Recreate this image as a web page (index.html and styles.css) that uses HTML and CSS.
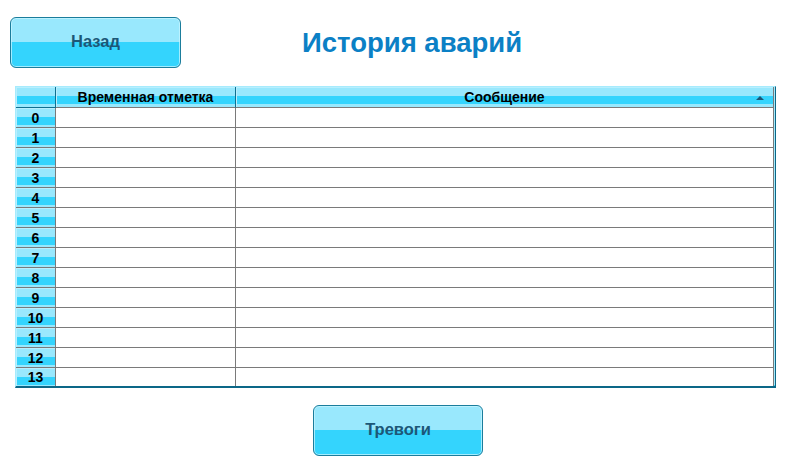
FILE: index.html
```html
<!DOCTYPE html>
<html lang="ru">
<head>
<meta charset="utf-8">
<title>История аварий</title>
<link rel="stylesheet" href="styles.css">
</head>
<body>
<div class="page">
  <header class="top">
    <button class="btn btn-back" type="button">Назад</button>
    <h1 class="title">История аварий</h1>
  </header>

  <div class="grid">
    <div class="row head-row">
      <div class="cell rh hc"></div>
      <div class="cell hc">Временная отметка</div>
      <div class="cell hc last">Сообщение<span class="sort"></span></div>
    </div>
    <div class="row"><div class="cell rh">0</div><div class="cell"></div><div class="cell last"></div></div>
    <div class="row"><div class="cell rh">1</div><div class="cell"></div><div class="cell last"></div></div>
    <div class="row"><div class="cell rh">2</div><div class="cell"></div><div class="cell last"></div></div>
    <div class="row"><div class="cell rh">3</div><div class="cell"></div><div class="cell last"></div></div>
    <div class="row"><div class="cell rh">4</div><div class="cell"></div><div class="cell last"></div></div>
    <div class="row"><div class="cell rh">5</div><div class="cell"></div><div class="cell last"></div></div>
    <div class="row"><div class="cell rh">6</div><div class="cell"></div><div class="cell last"></div></div>
    <div class="row"><div class="cell rh">7</div><div class="cell"></div><div class="cell last"></div></div>
    <div class="row"><div class="cell rh">8</div><div class="cell"></div><div class="cell last"></div></div>
    <div class="row"><div class="cell rh">9</div><div class="cell"></div><div class="cell last"></div></div>
    <div class="row"><div class="cell rh">10</div><div class="cell"></div><div class="cell last"></div></div>
    <div class="row"><div class="cell rh">11</div><div class="cell"></div><div class="cell last"></div></div>
    <div class="row"><div class="cell rh">12</div><div class="cell"></div><div class="cell last"></div></div>
    <div class="row final"><div class="cell rh">13</div><div class="cell"></div><div class="cell last"></div></div>
  </div>

  <footer class="bottom">
    <button class="btn btn-alarms" type="button">Тревоги</button>
  </footer>
</div>
</body>
</html>
```

FILE: styles.css
```css
* { box-sizing: border-box; }

html, body {
  margin: 0;
  padding: 0;
  background: #ffffff;
}

body {
  font-family: "Liberation Sans", Arial, sans-serif;
  width: 794px;
  height: 465px;
  overflow: hidden;
}

.page {
  display: flex;
  flex-direction: column;
}

/* ---------- top bar ---------- */
.top {
  display: flex;
  align-items: center;
  padding: 17px 0 0 10px;
}

.btn {
  display: flex;
  align-items: center;
  justify-content: center;
  width: 171px;
  height: 51px;
  padding: 0 0 2px 0;
  border: 1px solid #1b7d9c;
  border-radius: 6px;
  background: linear-gradient(to bottom, #99e8fd 0, #99e8fd 48%, #34d4fd 48%, #34d4fd 100%);
  box-shadow: inset 0 0 0 1px rgba(200, 245, 255, 0.75);
  color: #1c5777;
  font-family: "Liberation Sans", Arial, sans-serif;
  font-weight: bold;
  font-size: 16.5px;
  cursor: pointer;
}

.title {
  margin: 0 0 0 121px;
  font-size: 27.5px;
  font-weight: bold;
  color: #0b80c5;
  line-height: 30px;
  position: relative;
  top: 0;
}

/* ---------- grid ---------- */
.grid {
  margin: 18px 0 0 15px;
  width: 761px;
  border-top: 1px solid #a6ebfd;
  border-left: 1px solid #a6ebfd;
  border-right: 1px solid #0c6787;
  border-bottom: 2px solid #0c6787;
  padding-right: 1px;
  background: #a6ebfd;
  box-shadow: inset 0 -1px 0 #34d4fd;
  display: flex;
  flex-direction: column;
}

.row {
  display: grid;
  grid-template-columns: 40px 180px 538px;
  height: 20px;
  background: #ffffff;
}

.head-row {
  height: 21px;
}

.row.final {
  height: 18px;
}

.cell {
  border-right: 1px solid #7a7a7a;
  border-bottom: 1px solid #7a7a7a;
  font-size: 14px;
  font-weight: bold;
  color: #000000;
  display: flex;
  align-items: center;
  justify-content: center;
  line-height: 1;
}

.final .cell {
  border-bottom: none;
}

.cell.rh,
.cell.hc {
  background:
    linear-gradient(to bottom,
      #99e8fd 0, #99e8fd 9px,
      #34d4fd 9px, #34d4fd 17px,
      #99e8fd 17px, #99e8fd 100%);
  box-shadow: inset 1px 1px 0 #b8effe;
}

.cell.rh {
  font-size: 14px;
  border-right-color: #7a7a7a;
}

.head-row .cell {
  border-right-color: #0f6f90;
  padding-bottom: 1px;
}

.head-row .cell.rh {
  border-bottom-color: #0f6f90;
}

.head-row .cell.last {
  border-right-color: #7a7a7a;
  position: relative;
}

.sort {
  position: absolute;
  right: 9px;
  top: 9px;
  width: 0;
  height: 0;
  border-left: 4px solid transparent;
  border-right: 4px solid transparent;
  border-bottom: 4px solid #1c5777;
}

/* ---------- bottom ---------- */
.bottom {
  display: flex;
  padding: 17px 0 0 313px;
}

.btn-alarms {
  width: 170px;
}
```
